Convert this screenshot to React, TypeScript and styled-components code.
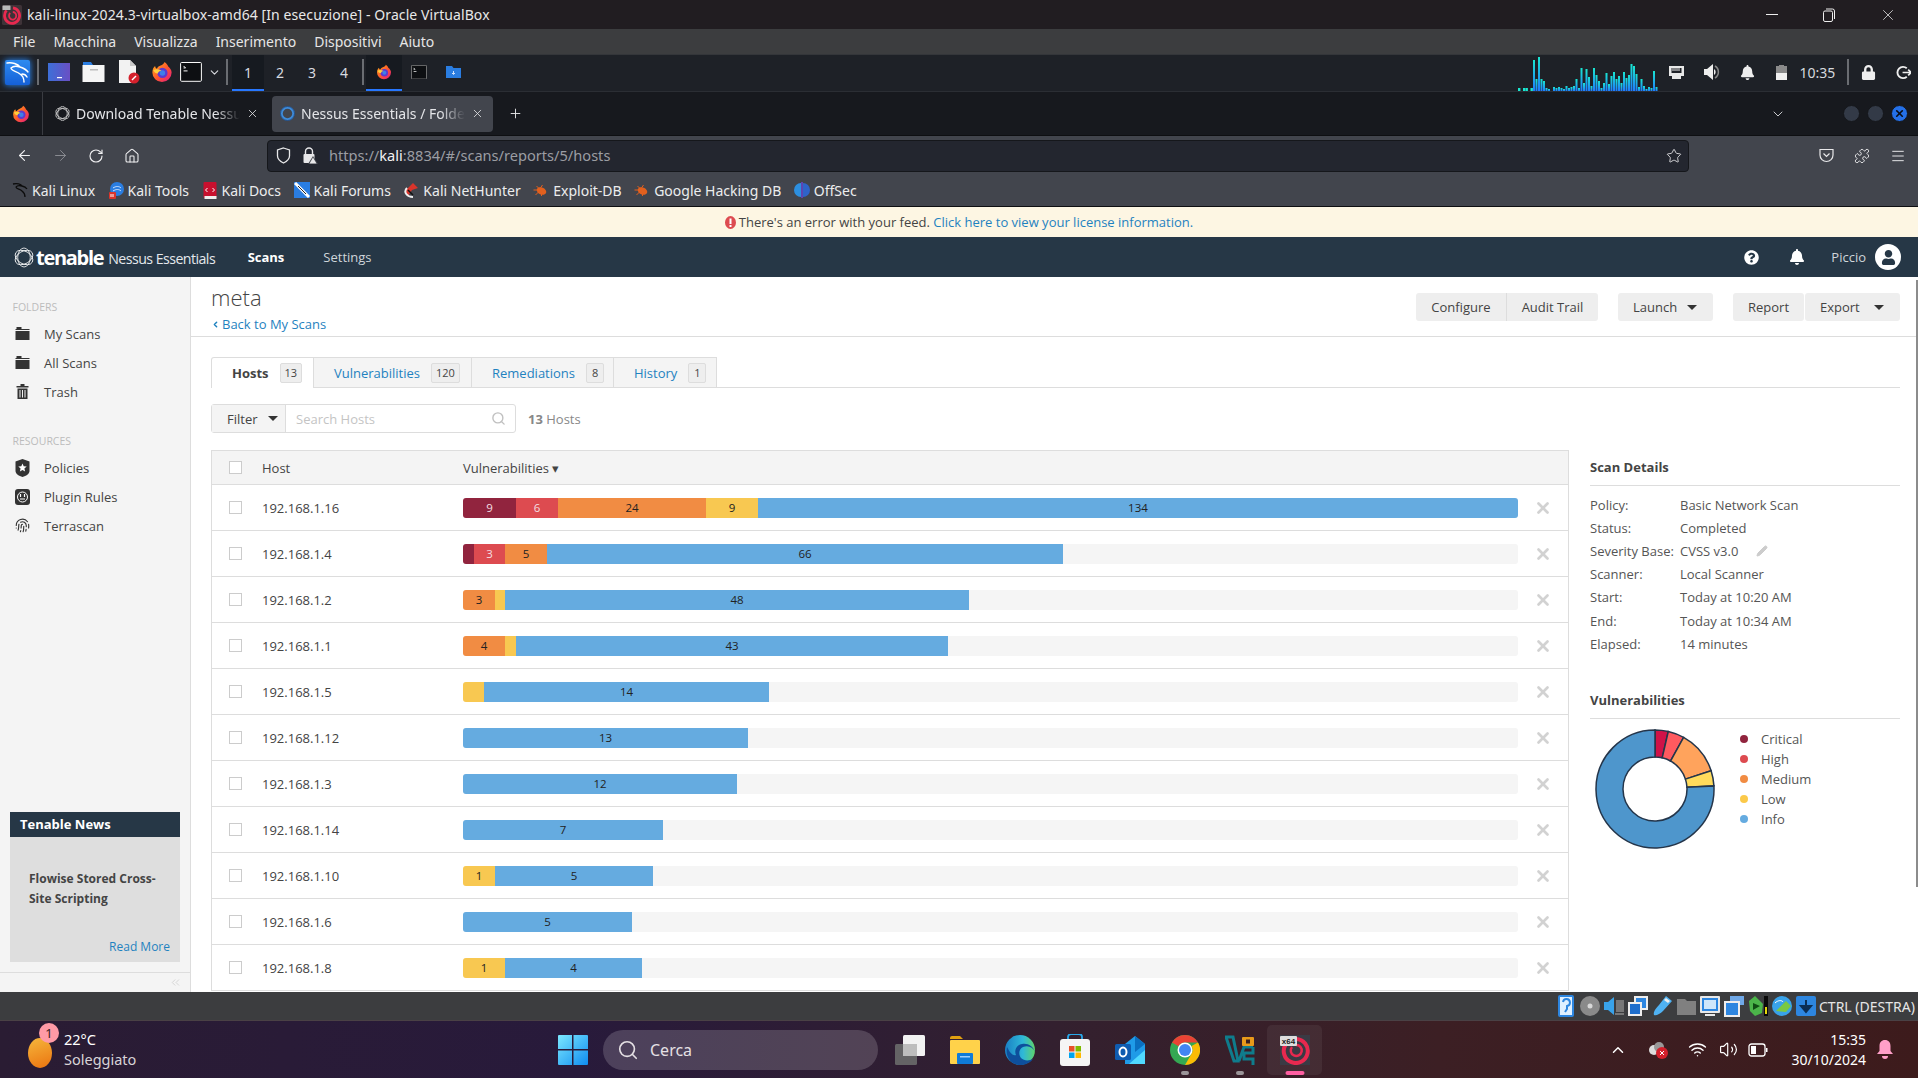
import React from "react";
import styled, { createGlobalStyle } from "styled-components";
import { ArrowLeft, ArrowRight, RotateCw, Home, Star, Menu, Puzzle, X, Plus, ChevronDown, ChevronUp, ChevronLeft, Search, ChevronsLeft, Fingerprint, Volume2, Wifi, Pencil } from "lucide-react";
import { FaBell, FaLock, FaQuestionCircle, FaUser } from "react-icons/fa";

const Global = createGlobalStyle`
  html, body { margin: 0; padding: 0; width: 1918px; height: 1078px; overflow: hidden; background: #fff; }
  * { box-sizing: border-box; }
  body { font-family: "Open Sans", "Noto Sans", sans-serif; }
`;

const Desktop = styled.div`display:flex;flex-direction:column;width:1918px;height:1078px;overflow:hidden;`;

/* ---------- VirtualBox chrome ---------- */
const TitleBar = styled.div`height:29px;flex:none;background:#211d21;color:#e8e8e8;display:flex;align-items:center;font:14px "Noto Sans",sans-serif;padding-left:2px;`;
const TitleText = styled.span`margin-left:5px;flex:1;letter-spacing:.09px;`;
const WinBtn = styled.span<{ $w: number }>`width:${p => p.$w}px;display:flex;justify-content:center;align-items:center;color:#eee;`;
const MenuBar = styled.div`height:26px;flex:none;background:#3c3d3f;color:#e6e6e6;display:flex;align-items:center;gap:18px;padding-left:13px;font:14px "Noto Sans",sans-serif;border-bottom:1px solid #34363a;`;

/* ---------- Kali panel ---------- */
const Panel = styled.div`height:37px;flex:none;background:#1e2127;display:flex;align-items:center;color:#d8dbe0;border-bottom:1px solid #2b2e34;padding-right:3px;`;
const PanelSlot = styled.div<{ $w: number; $on?: boolean }>`width:${p => p.$w}px;height:36px;flex:none;display:flex;align-items:center;justify-content:center;font:14px "Noto Sans",sans-serif;border-bottom:2px solid ${p => (p.$on ? "#2777ff" : "transparent")};background:${p => (p.$on ? "#161a20" : "transparent")};`;
const PanelSep = styled.i`width:2px;height:26px;background:#6a6d72;display:block;`;
const PanelClock = styled.span`font:14px "Noto Sans",sans-serif;color:#d6d9de;`;
const Grow = styled.div`flex:1;`;

/* ---------- Firefox ---------- */
const TabStrip = styled.div`height:43px;flex:none;background:#17191e;display:flex;align-items:center;color:#e4e5e8;font:14px "Noto Sans",sans-serif;padding-right:3px;`;
const StripSlot = styled.div<{ $w: number }>`width:${p => p.$w}px;flex:none;height:100%;display:flex;align-items:center;justify-content:center;`;
const StripDivider = styled.i`width:1px;height:100%;background:#3a3c42;display:block;`;
const BrowserTab = styled.div<{ $w: number; $on?: boolean; $pl: number; $pr: number }>`width:${p => p.$w}px;height:36px;flex:none;display:flex;align-items:center;gap:6px;padding:0 ${p => p.$pr}px 0 ${p => p.$pl}px;border-radius:4px;background:${p => (p.$on ? "#42454d" : "transparent")};`;
const TabLabel = styled.span`flex:1;overflow:hidden;white-space:nowrap;-webkit-mask-image:linear-gradient(90deg,#000 85%,transparent);mask-image:linear-gradient(90deg,#000 85%,transparent);`;
const WinDot = styled.span<{ $on?: boolean }>`width:17px;height:17px;border-radius:50%;background:${p => (p.$on ? "#2470e8" : "#333a47")};border:1px solid #15171b;display:flex;align-items:center;justify-content:center;margin-right:7px;color:#0b0d12;`;
const NavBar = styled.div`height:43px;flex:none;background:#42454d;display:flex;align-items:center;padding:0 2px 3px 6px;color:#e8e8ea;border-top:1px solid #0e0f12;`;
const NavBtn = styled.div<{ $dim?: boolean }>`width:36px;display:flex;justify-content:center;color:${p => (p.$dim ? "#8a8c92" : "#f0f0f2")};`;
const UrlBox = styled.div`width:1422px;height:32px;margin-left:117px;background:#23262f;border:1px solid #15171b;border-radius:4px;display:flex;align-items:center;padding:0 6px 0 8px;font:14.6px "Noto Sans",sans-serif;color:#9b9da3;`;
const UrlAddr = styled.span`margin-left:11px;flex:1;padding-bottom:1px;b{color:#f2f2f2;font-weight:400;}`;
const UrlGap = styled.span`width:11px;`;
const Bookmarks = styled.div`height:29px;flex:none;background:#42454d;border-bottom:1px solid #0e0f12;display:flex;align-items:center;gap:12.5px;padding:0 0 4px 12px;color:#eceded;font:14px "Noto Sans",sans-serif;`;
const Bookmark = styled.span`display:flex;align-items:center;gap:4px;svg{width:16px;flex:none;}`;

/* ---------- Nessus ---------- */
const FeedBar = styled.div`height:30px;flex:none;background:#fdf6e3;display:flex;align-items:center;justify-content:center;gap:3px;font-size:13px;color:#444;`;
const Link = styled.a`color:#1f82c0;text-decoration:none;`;
const AppHeader = styled.div`height:40px;flex:none;background:#263746;display:flex;align-items:center;padding-left:14px;color:#fff;`;
const Wordmark = styled.span`font:700 20px "Open Sans",sans-serif;letter-spacing:-1.3px;margin-left:2px;`;
const Product = styled.span`font-size:14.2px;letter-spacing:-.55px;margin-left:5px;color:#e4e8ec;margin-top:2px;`;
const TopNav = styled.span<{ $on?: boolean }>`font-size:13px;font-weight:${p => (p.$on ? 700 : 400)};color:${p => (p.$on ? "#fff" : "#cfd5da")};`;
const HeaderGap = styled.span<{ $w: number }>`width:${p => p.$w}px;flex:none;`;
const HeadRight = styled.div`margin-left:auto;display:flex;align-items:center;`;
const Avatar = styled.span`width:26px;height:26px;border-radius:50%;background:#fff;display:flex;align-items:center;justify-content:center;overflow:hidden;color:#263746;margin:0 17px 0 9px;`;
const Main = styled.div`height:715px;flex:none;display:flex;overflow:hidden;position:relative;`;
const Sidebar = styled.aside`width:191px;flex:none;background:#f4f4f4;border-right:1px solid #ddd;padding-top:23px;display:flex;flex-direction:column;`;
const SideLabel = styled.div<{ $mt?: number }>`height:14px;line-height:14px;font-size:10.5px;color:#bcbcbc;padding-left:12.5px;margin-top:${p => p.$mt ?? 0}px;margin-bottom:5px;`;
const SideItem = styled.div`height:29px;display:flex;align-items:center;font-size:13px;color:#444;padding-left:15px;gap:14px;svg{flex:none;width:15px;}`;
const NewsCard = styled.div`margin:auto 10px 10px;height:150px;background:#dedede;display:flex;flex-direction:column;`;
const NewsHead = styled.div`height:25px;background:#263746;color:#fff;font-weight:700;font-size:13px;line-height:25px;padding-left:10px;`;
const NewsTitle = styled.div`font-weight:700;font-size:12px;line-height:20px;color:#444;padding:32px 10px 0 19px;`;
const NewsMore = styled.div`margin-top:auto;text-align:right;padding:0 10px 7px 0;font-size:12px;`;
const SideFoot = styled.div`height:20px;border-top:1px solid #ddd;display:flex;justify-content:flex-end;align-items:center;padding-right:8px;color:#c4c4c4;`;
const Content = styled.main`flex:1;min-width:0;display:flex;flex-direction:column;background:#fff;`;
const PageHead = styled.div`height:60px;flex:none;border-bottom:1px solid #ddd;display:flex;justify-content:space-between;padding:0 18px 0 20px;`;
const PageTitleCol = styled.div`display:flex;flex-direction:column;`;
const PageTitle = styled.div`font-size:22px;font-weight:300;line-height:30px;margin-top:5px;color:#444;`;
const Back = styled(Link)`font-size:13px;line-height:18px;margin-top:3px;display:inline-flex;align-items:center;gap:2px;`;
const ActionRow = styled.div`display:flex;align-items:flex-start;padding-top:16px;`;
const Action = styled.div<{ $w: number; $ml?: number; $l?: boolean; $r?: boolean; $caret?: boolean; $div?: boolean }>`width:${p => p.$w}px;height:28px;margin-left:${p => p.$ml ?? 0}px;background:#eee;color:#444;font-size:13px;display:flex;align-items:center;justify-content:${p => (p.$caret ? "space-between" : "center")};padding:0 ${p => (p.$caret ? "16px 0 15px" : "0")};border-left:${p => (p.$div ? "1px solid #ddd" : "0")};border-radius:${p => (p.$l ? "3px" : 0)} ${p => (p.$r ? "3px 3px" : "0 0")} ${p => (p.$l ? "3px" : 0)};`;
const Caret = styled.i`width:0;height:0;border:5px solid transparent;border-top:5px solid #333;border-bottom:0;display:block;`;
const Body = styled.div`padding:20px 0 0 20px;flex:1;display:flex;flex-direction:column;min-height:0;`;
const TabRow = styled.div`height:31px;flex:none;display:flex;margin-right:18px;border-bottom:1px solid #ddd;`;
const ScanTab = styled.div<{ $w: number; $on?: boolean }>`width:${p => p.$w}px;height:${p => (p.$on ? 31 : 30)}px;background:${p => (p.$on ? "#fff" : "#f4f4f4")};border:1px solid #ddd;border-left-width:${p => (p.$on ? 1 : 0)}px;border-bottom:0;display:flex;align-items:center;padding-left:20px;gap:11px;font-size:13px;font-weight:${p => (p.$on ? 700 : 400)};color:${p => (p.$on ? "#444" : "#1f82c0")};border-radius:${p => (p.$on ? "3px 0 0 0" : 0)};`;
const Count = styled.span`min-width:18px;height:20px;padding:0 4px;border:1px solid #ddd;background:#eee;border-radius:2px;color:#444;font-size:11px;font-weight:400;line-height:18px;text-align:center;`;
const FilterRow = styled.div`height:29px;margin-top:16px;flex:none;display:flex;align-items:center;`;
const FilterGroup = styled.div`width:305px;height:29px;border:1px solid #ddd;border-radius:3px;display:flex;align-items:stretch;`;
const FilterBtn = styled.div`width:74px;background:#f4f4f4;border-right:1px solid #ddd;color:#444;font-size:13px;display:flex;align-items:center;gap:10px;padding-left:15px;`;
const SearchField = styled.div`flex:1;display:flex;align-items:center;justify-content:space-between;padding:0 9px 0 10px;color:#c4c4c4;font-size:13px;`;
const HostCount = styled.div`margin-left:12px;font-size:13px;color:#888;b{font-weight:700;}`;
const Columns = styled.div`margin-top:17px;display:flex;align-items:flex-start;`;
const Table = styled.div`width:1358px;flex:none;border:1px solid #ddd;border-bottom:0;`;
const Row = styled.div<{ $head?: boolean }>`height:${p => (p.$head ? 34 : 46)}px;display:grid;grid-template-columns:50px 201px 1055px 1fr;align-items:center;background:${p => (p.$head ? "#f4f4f4" : "#fff")};border-bottom:1px solid #ddd;font-size:13px;color:#444;`;
const Check = styled.span`width:13px;height:13px;border:1px solid #ccc;background:#fff;margin-left:17px;display:block;`;
const Track = styled.div`height:20px;background:#f5f5f5;border-radius:3px;display:flex;overflow:hidden;`;
const Seg = styled.div<{ $c: string; $t: string }>`background:${p => p.$c};color:${p => p.$t};font-size:11.5px;line-height:20px;text-align:center;flex:none;`;
const RowX = styled.div`display:flex;justify-content:center;color:#d2d2d2;`;
const Aside = styled.div`width:310px;margin-left:21px;flex:none;`;
const AsideTitle = styled.div<{ $mt?: number }>`height:36px;line-height:34px;font-weight:700;font-size:13px;color:#444;border-bottom:1px solid #ddd;margin-top:${p => p.$mt ?? 0}px;`;
const Details = styled.div`padding-top:7px;`;
const DetailRow = styled.div`height:23.2px;display:grid;grid-template-columns:90px auto 1fr;align-items:center;font-size:13px;color:#555;`;
const PencilWrap = styled.span`margin-left:18px;color:#ccc;display:flex;`;
const ChartRow = styled.div`display:flex;margin-top:10px;padding-left:5px;`;
const Legend = styled.div`margin-left:25px;`;
const LegendItem = styled.div`height:20px;display:flex;align-items:center;gap:13px;font-size:13px;color:#555;`;
const LegendDot = styled.i<{ $c: string }>`width:8px;height:8px;border-radius:50%;background:${p => p.$c};display:block;`;
const ScrollThumb = styled.div`position:absolute;right:0;top:3px;width:2px;height:607px;background:#8c8c8c;`;

/* ---------- bottom ---------- */
const StatusBar = styled.div`height:28px;flex:none;background:#3c3d3f;display:flex;align-items:center;justify-content:flex-end;color:#e6e6e6;font:14px "Noto Sans",sans-serif;`;
const StatusIcon = styled.span`width:24px;display:flex;justify-content:center;`;
const StatusText = styled.span`width:100px;padding-left:1px;white-space:nowrap;`;
const Taskbar = styled.div`flex:1;background:linear-gradient(90deg,#2a1c33 0%,#281a3b 30%,#33202f 55%,#3c1f24 75%,#3d1b1c 100%);display:flex;align-items:center;color:#fff;font:14px "Noto Sans",sans-serif;border-top:1px solid #4a4145;`;
const Weather = styled.div`width:545px;flex:none;display:flex;align-items:center;padding-left:28px;`;
const WeatherOrb = styled.div`width:24px;height:30px;border-radius:50%;background:linear-gradient(160deg,#f6b73c,#ea7310);position:relative;margin-top:6px;`;
const WeatherBadge = styled.span`position:absolute;left:11px;top:-15px;width:20px;height:20px;border-radius:50%;background:#ff9aa6;color:#3a1a20;font-size:13px;text-align:center;line-height:20px;`;
const WeatherText = styled.div`margin-left:12px;line-height:20px;font-size:14.5px;margin-top:-1px;span{display:block;color:#d8d4d8;}`;
const TaskSlot = styled.div<{ $w?: number; $on?: boolean }>`width:${p => p.$w ?? 55}px;height:50px;flex:none;display:flex;flex-direction:column;align-items:center;justify-content:center;position:relative;border-radius:5px;background:${p => (p.$on ? "rgba(255,255,255,.06)" : "transparent")};`;
const TaskPip = styled.i<{ $on?: boolean }>`position:absolute;bottom:0;left:50%;transform:translateX(-50%);height:4px;width:${p => (p.$on ? 19 : 8)}px;border-radius:2px;background:${p => (p.$on ? "#ff5fa2" : "#9b9599")};`;
const SearchPill = styled.div`width:275px;height:40px;margin:0 4px 0 3px;border-radius:20px;background:rgba(255,255,255,.17);display:flex;align-items:center;padding-left:14px;gap:11px;color:#e5e0e4;font-size:16px;`;
const Tray = styled.div`margin-left:auto;display:flex;align-items:center;padding-right:14px;`;
const TrayClock = styled.div`width:92px;text-align:right;line-height:19.5px;font-size:14px;`;

/* ---------- drawings ---------- */
const Firefox = ({ s = 22 }: { s?: number }) => (
  <svg width={s} height={s} viewBox="0 0 24 24">
    <defs><linearGradient id="ffg" x1="0" y1="0" x2="1" y2="1"><stop offset="0" stopColor="#ffb21a" /><stop offset=".5" stopColor="#ff5a2c" /><stop offset="1" stopColor="#e31587" /></linearGradient></defs>
    <path d="M12 23a10.5 10.5 0 0 1-10.5-10.5C1.5 9 3 6.5 4.5 5.5 4.6 7 5.4 8 6.4 8.4 7.2 6.500 9 5.500 10.500 5 12.500 4 14.500 2.500 14.800 1c2.500 2 3.500 3.700 4 5 2 1.500 3.700 4 3.700 6.500A10.500 10.500 0 0 1 12 23z" fill="url(#ffg)" />
    <circle cx="12.500" cy="13" r="5.600" fill="#5b3bd0" /><circle cx="12.500" cy="13" r="3" fill="#3f7fe8" />
    <path d="M2.500 10c3-1.500 6-1 9 .5-2 .3-3.500 1-4 3C6 14 3.500 12.500 2.500 10z" fill="#ffcf3c" />
  </svg>
);
const VBoxLogo = ({ s = 20 }: { s?: number }) => (
  <svg width={s} height={s} viewBox="0 0 20 20">
    <rect width="20" height="20" rx="1.500" fill="#3f3338" />
    <path d="M11 2.800a7.500 7.800 0 1 1-6.500 2.500" fill="none" stroke="#e8294f" strokeWidth="2.800" />
    <path d="M10.800 7a3.600 3.800 0 1 1-2.600 1" fill="none" stroke="#e8294f" strokeWidth="1.800" />
    <rect x="0.500" y="0.500" width="8" height="4.500" rx=".5" fill="#b8b8b8" />
  </svg>
);
const Kali = () => (
  <svg width="25" height="25" viewBox="0 0 25 25" style={{ filter: "drop-shadow(0 0 3px #2a8cff)" }}>
    <defs><linearGradient id="kg" x1="0" y1="0" x2="0" y2="1"><stop offset="0" stopColor="#2d8bf0" /><stop offset="1" stopColor="#1560d8" /></linearGradient></defs>
    <rect width="25" height="25" rx="2" fill="url(#kg)" />
    <path d="M2 3c5-1 11 1 13 4-3-1-7-1-9 1 0 3 6 3 9 6 3 2 4 5 4 8M15 7c3 1 6 2 8 5M17 14c2 0 4 1 5 3" fill="none" stroke="#fff" strokeWidth="1.400" strokeLinecap="round" />
  </svg>
);
const TenableRing = () => (
  <svg width="20" height="21" viewBox="0 0 20 21" fill="none" stroke="#fff" strokeWidth=".8">
    <ellipse cx="10" cy="10.500" rx="9.500" ry="6.300" transform="rotate(30 10 10.500)" />
    <ellipse cx="10" cy="10.500" rx="9.500" ry="6.300" transform="rotate(90 10 10.500)" />
    <ellipse cx="10" cy="10.500" rx="9.500" ry="6.300" transform="rotate(150 10 10.500)" />
  </svg>
);
const FolderGlyph = () => (<svg width="14" height="13" viewBox="0 0 14 13" fill="#333"><rect x="1" y="0" width="5" height="2" /><rect x="0" y="2" width="14" height="1" /><rect x="0" y="4" width="14" height="9" /></svg>);
const TrashGlyph = () => (<svg width="14" height="15" viewBox="0 0 14 15" fill="#333"><rect x="1" y="2" width="12" height="1.500" /><rect x="5" y="0" width="4" height="2" /><path d="M2 4.500h10V15H2zM4 6v7.500h1V6zm2.500 0v7.500h1V6zM9 6v7.500h1V6z" fillRule="evenodd" /></svg>);
const ShieldStar = () => (<svg width="14" height="18" viewBox="0 0 14 18"><path d="M7 0l7 2.500V12c0 3-3.500 5-7 6-3.500-1-7-3-7-6V2.500z" fill="#333" /><path d="M7 4.500l1.200 2.800 3 .2-2.300 2 .7 3L7 11l-2.600 1.500.7-3-2.300-2 3-.2z" fill="#fff" /></svg>);
const PlugBox = () => (<svg width="15" height="16" viewBox="0 0 15 16"><rect width="15" height="16" rx="3" fill="#333" /><circle cx="7.500" cy="8" r="5" fill="none" stroke="#fff" strokeWidth="1" /><path d="M5.500 5v3M9.500 5v3M5 10h5" stroke="#fff" strokeWidth="1.200" /></svg>);

const Doc = () => (<svg width="22" height="24" viewBox="0 0 22 24"><path d="M1 0h11l6 6v17H1z" fill="#f2f2f2" /><path d="M12 0l6 6h-6z" fill="#c9c9c9" /><circle cx="16" cy="18" r="5.500" fill="#d4202c" /><path d="M14 20l4-4" stroke="#fff" strokeWidth="1.500" /></svg>);
const FileMgr = () => (<svg width="23" height="20" viewBox="0 0 23 20"><path d="M1 0h8l2 3H1z" fill="#2a7de1" /><rect x="0.500" y="3" width="22" height="17" fill="#f5f5f5" /><rect x="8" y="7" width="8" height="1.500" fill="#bbb" /></svg>);
const DesktopIcon = () => (<svg width="22" height="18" viewBox="0 0 22 18"><defs><linearGradient id="dsk" x1="0" x2="1"><stop offset="0" stopColor="#3d6fd8" /><stop offset="1" stopColor="#6a4fc4" /></linearGradient></defs><rect width="22" height="18" fill="url(#dsk)" /><rect x="9" y="14" width="5" height="1.200" fill="#fff" /></svg>);
const Term = ({ s = 22, box = "#fff" }: { s?: number; box?: string }) => (<svg width={s} height={s * 0.9} viewBox="0 0 22 20"><rect x=".5" y=".5" width="21" height="19" rx="1" fill="#0d0f12" stroke={box} /><path d="M3.500 4l2 2-2 0M3.500 9h4" stroke="#fff" strokeWidth="1" fill="none" /></svg>);
const SmallFolder = () => (<svg width="15" height="12" viewBox="0 0 15 12"><path d="M0 0h6l1.500 2H15v10H0z" fill="#2a7de1" /><path d="M7.500 5v3m-1.500-1l1.500 1.500L9 7" stroke="#cfe3ff" fill="none" /></svg>);
const NetGraph = () => {
  const h = [3, 0, 3, 3, 0, 3, 31, 12, 34, 12, 10, 3, 2, 0, 4, 3, 4, 3, 2, 5, 3, 4, 5, 12, 3, 23, 8, 22, 14, 5, 23, 16, 10, 3, 8, 18, 7, 15, 19, 12, 15, 8, 19, 13, 16, 27, 25, 17, 4, 12, 5, 2, 4, 3, 20, 4];
  return (
    <svg width="140" height="35" viewBox="0 0 140 35">
      <defs><linearGradient id="ng" x1="0" y1="0" x2="0" y2="1"><stop offset="0" stopColor="#19e6d0" /><stop offset="1" stopColor="#1f7aff" /></linearGradient></defs>
      {h.map((v, i) => v > 0 && <rect key={i} x={i * 2.500} y={35 - v} width={i < 6 ? 2.400 : 2} height={v} fill={i < 6 ? "#19e6d0" : "url(#ng)"} />)}
    </svg>
  );
};
const NetIcon = () => (<svg width="15" height="15" viewBox="0 0 15 15"><path d="M0 1h15v10h-3v3H3v-3H0z" fill="#e8e8e8" /><path d="M2.500 3h10v5h-10z" fill="#1e2127" /><path d="M4 3v3M6 3v3M8 3v3M10 3v3" stroke="#e8e8e8" /></svg>);
const SpeakerIcon = () => (<svg width="18" height="18" viewBox="0 0 18 18"><path d="M0 6h3l6-5v16l-6-5H0z" fill="#eee" /><path d="M11 3a7 7 0 0 1 0 12" stroke="#888" strokeWidth="1.500" fill="none" /><path d="M10 6a3.500 3.500 0 0 1 0 6z" fill="#eee" /></svg>);
const BatteryIcon = () => (<svg width="11" height="15" viewBox="0 0 11 15"><rect x="0" y="1" width="11" height="14" fill="#8a8a8a" /><rect x="3" width="5" height="1" fill="#8a8a8a" /><rect y="8" width="11" height="7" fill="#f0f0f0" /></svg>);
const PowerIcon = () => (<svg width="15" height="15" viewBox="0 0 16 16" fill="none" stroke="#eee" strokeWidth="2"><path d="M11.500 3.500a6 6 0 1 0 0 9" /><path d="M7 8h9M13 5l3 3-3 3" strokeWidth="1.800" /></svg>);
const RestoreIcon = () => (<svg width="12" height="14" viewBox="0 0 12 14" fill="none" stroke="#eee"><rect x=".5" y="3" width="9" height="10.500" rx="1.500" /><path d="M3 1h6.500A2 2 0 0 1 11.500 3v8" /></svg>);
const ShieldOut = () => (<svg width="15" height="17" viewBox="0 0 15 17" fill="none" stroke="#e8e8ea" strokeWidth="1.300"><path d="M7.500 1l6 2v6c0 3-3 5.500-6 7-3-1.500-6-4-6-7V3z" /></svg>);
const LockWarn = () => (<svg width="16" height="17" viewBox="0 0 16 17"><path d="M3.500 7V4.500a3.500 3.500 0 0 1 7 0V7" fill="none" stroke="#e8e8ea" strokeWidth="1.400" /><rect x="1.500" y="7" width="11" height="9" rx="1" fill="#e8e8ea" /><path d="M11 9l5 8H6z" fill="#42454d" /><path d="M11 10.500l3.500 6h-7z" fill="#e8e8ea" /></svg>);
const Pocket = () => (<svg width="15" height="15" viewBox="0 0 15 15" fill="none" stroke="#e8e8ea" strokeWidth="1.200"><path d="M1 1.500h13V7A6.500 6.500 0 0 1 1 7z" /><path d="M4.500 5.500l3 3 3-3" /></svg>);
const NessusIcon = () => (<svg width="15" height="15" viewBox="0 0 15 15"><circle cx="7.500" cy="7.500" r="6" fill="none" stroke="#3f8bd8" strokeWidth="2.500" /><circle cx="7.500" cy="7.500" r="7" fill="none" stroke="#1a3e72" strokeWidth=".7" /></svg>);
const Spinner = () => (<svg width="15" height="15" viewBox="0 0 20 20" fill="none" stroke="#d8d8d8" strokeWidth="1"><ellipse cx="10" cy="10" rx="9.500" ry="6.300" transform="rotate(30 10 10)" /><ellipse cx="10" cy="10" rx="9.500" ry="6.300" transform="rotate(90 10 10)" /><ellipse cx="10" cy="10" rx="9.500" ry="6.300" transform="rotate(150 10 10)" /></svg>);
const Bug = () => (<svg width="15" height="13" viewBox="0 0 15 13"><ellipse cx="8" cy="7" rx="5" ry="3.500" fill="#e2601e" transform="rotate(25 8 7)" /><path d="M0 6h4M3 2l3 3M9 1l-2 3M2 11l3-3M8 12l0-3" stroke="#e2601e" /></svg>);

const BmKali = () => (<svg width="16" height="16" viewBox="0 0 16 16" fill="none" stroke="#0c0c0c" strokeWidth="1.300"><path d="M1 2c4-1 8 0 9 2-2-.5-5-.5-6 1 0 2 4 2 6 4 2 1.500 3 3 3 6M10 4c2 .5 4 1.500 5 3" /></svg>);
const BmTools = () => (<svg width="16" height="17" viewBox="0 0 16 17"><circle cx="9" cy="7" r="7" fill="#2a7de1" /><path d="M5 6c3-2 6-2 8 0M5 9c3-2 6-2 8 0" stroke="#cfe3ff" fill="none" /><rect x="1" y="10" width="7" height="7" rx="1" fill="#d9342b" /><path d="M3 12v3M5 12v3" stroke="#fff" /></svg>);
const BmDocs = () => (<svg width="13" height="17" viewBox="0 0 13 17"><rect width="13" height="16" rx="1" fill="#c8102e" /><rect x="1" y="14" width="12" height="3" fill="#eee" /><path d="M4 6l-2 2 2 2M9 6l2 2-2 2" stroke="#fff" fill="none" /></svg>);
const BmForums = () => (<svg width="16" height="16" viewBox="0 0 16 16"><rect width="16" height="16" fill="#2a7de1" /><path d="M1 1l14 14" stroke="#fff" strokeWidth="3" /><path d="M4 4l8 8" stroke="#222" strokeWidth="1" /></svg>);
const BmHunter = () => (<svg width="16" height="16" viewBox="0 0 16 16" fill="none"><path d="M2 9l8-8 5 5-6 2-4 6z" fill="#d9342b" /><path d="M4 6c-4 4 0 9 6 9" stroke="#eee" strokeWidth="2" /><path d="M5 8l5 5" stroke="#111" strokeWidth="1.500" /></svg>);
const BmOff = () => (<svg width="15" height="16" viewBox="0 0 15 16"><path d="M6.500 1A7 7 0 0 0 6.500 15z" fill="#2c8fe0" /><path d="M8.500 1A7 7 0 0 1 8.500 15z" fill="#2f63c8" /><path d="M7.500 0v16" stroke="#6a44d0" strokeWidth="1.500" /></svg>);

const St = ({ k }: { k: number }) => {
  const b = "#2d86e0";
  switch (k) {
    case 0: return <svg width="16" height="22" viewBox="0 0 16 22"><rect width="16" height="22" rx="2" fill={b} /><rect x="2" y="2" width="12" height="18" fill="#dff0ff" /><path d="M5 7a3.500 3.500 0 1 1 4 4v3l-2 3" stroke={b} strokeWidth="2" fill="none" /></svg>;
    case 1: return <svg width="20" height="20" viewBox="0 0 20 20"><circle cx="10" cy="10" r="10" fill="#8a8a8a" /><circle cx="10" cy="10" r="2.500" fill="#d8d8d8" /></svg>;
    case 2: return <svg width="20" height="20" viewBox="0 0 20 20"><path d="M0 6h4l6-5v18l-6-5H0z" fill="#39a3ea" /><rect x="12" y="4" width="8" height="12" fill="#777" /><rect x="11" y="17" width="9" height="2" fill="#777" /></svg>;
    case 3: return <svg width="20" height="20" viewBox="0 0 20 20"><rect x="6" y="0" width="14" height="14" fill="#eee" /><rect x="8" y="2" width="10" height="10" fill={b} /><rect x="0" y="6" width="14" height="14" fill="#eee" /><rect x="2" y="8" width="10" height="10" fill="#1e6ecc" /></svg>;
    case 4: return <svg width="20" height="20" viewBox="0 0 20 20"><path d="M14 0l6 5-9 10c-3 3-7 5-9 4-1-3 2-7 5-10z" fill="#4fb2f2" /><path d="M14 2l4 3-2 2-4-3z" fill="#eee" /></svg>;
    case 5: return <svg width="19" height="18" viewBox="0 0 19 18"><path d="M0 2h8l2 2h9v14H0z" fill="#808080" /></svg>;
    case 6: return <svg width="20" height="20" viewBox="0 0 20 20"><rect width="20" height="17" rx="1" fill="#e8e8e8" /><rect x="2" y="2" width="16" height="13" fill={b} /><rect x="4" y="4" width="12" height="9" fill="#cfe6fa" /><rect x="5" y="18" width="10" height="2" fill="#e8e8e8" /></svg>;
    case 7: return <svg width="20" height="21" viewBox="0 0 20 21"><rect x="6" y="0" width="14" height="9" fill="#6fa8e8" /><rect x="0" y="5" width="16" height="16" fill="#eee" /><rect x="2" y="7" width="12" height="12" fill={b} /></svg>;
    case 8: return <svg width="20" height="20" viewBox="0 0 20 20"><rect x="16" width="4" height="20" fill="#0a0a0a" /><rect x="17" y="11" width="2" height="7" fill="#e8d80a" /><path d="M1 5l6-5 8 8-1 9-7 3-5-5z" fill="#4bb54a" /><path d="M5 7l7 3-7 4z" fill="#0f4d14" /></svg>;
    case 9: return <svg width="20" height="22" viewBox="0 0 20 22"><circle cx="10" cy="11" r="10" fill="#39a3ea" /><path d="M4 16L14 6l5 5-5 6z" fill="#7ac943" /><path d="M3 8c3-3 7-3 8-1" stroke="#fff" fill="none" /></svg>;
    default: return <svg width="20" height="20" viewBox="0 0 20 20"><rect width="20" height="20" rx="2" fill={b} /><path d="M10 4v8M5 10h10l-5 6z" stroke="#0b2e55" strokeWidth="2" fill="#0b2e55" /></svg>;
  }
};

const WinLogo = () => (<svg width="30" height="30" viewBox="0 0 30 30"><defs><linearGradient id="wl" x1="0" y1="0" x2="1" y2="1"><stop offset="0" stopColor="#7ce8ff" /><stop offset="1" stopColor="#0f8cf0" /></linearGradient></defs><path d="M0 1a1 1 0 0 1 1-1h13v14H0zM15.500 0H29a1 1 0 0 1 1 1v13H15.500zM0 15.500h14V30H1a1 1 0 0 1-1-1zM15.500 15.500H30V29a1 1 0 0 1-1 1H15.500z" fill="url(#wl)" /></svg>);
const TaskView = () => (<svg width="30" height="30" viewBox="0 0 30 30"><rect x="8" y="0" width="22" height="21" rx="1.500" fill="#f2f2f2" /><rect x="0" y="9" width="22" height="21" rx="1.500" fill="#6a6a6a" opacity=".9" /><rect x="8" y="9" width="14" height="12" fill="#bdbdbd" /></svg>);
const Explorer = () => (<svg width="30" height="28" viewBox="0 0 30 28"><path d="M0 2a2 2 0 0 1 2-2h8l3 3H0z" fill="#e0a010" /><rect y="4" width="30" height="24" rx="1" fill="#ffd24a" /><rect x="7" y="17" width="16" height="11" rx="1" fill="#0f7bd8" /><rect x="10" y="20" width="10" height="1.500" fill="#9cd0ff" /></svg>);
const Edge = () => (<svg width="30" height="30" viewBox="0 0 30 30"><defs><linearGradient id="eg" x1="0" y1="0" x2="1" y2="0"><stop offset="0" stopColor="#1a7fc4" /><stop offset=".6" stopColor="#2fb8d8" /><stop offset="1" stopColor="#5fd36a" /></linearGradient></defs><circle cx="15" cy="15" r="15" fill="url(#eg)" /><path d="M30 17c-2-5-7-7-12-5-4 2-5 7-2 11 3 3 8 3 12 1-3 4-8 6-13 6C6 30 0 22 2 12 5 18 8 21 11 20 9 16 11 10 17 9c6-1 11 2 13 8z" fill="#0e4f9c" /></svg>);
const Store = () => (<svg width="30" height="32" viewBox="0 0 30 32"><path d="M8 6V3a3 3 0 0 1 3-3h8a3 3 0 0 1 3 3v3" fill="none" stroke="#28a8ea" strokeWidth="1.800" /><rect y="5" width="30" height="27" rx="3" fill="#f5f5f5" /><rect x="9" y="12" width="5.500" height="5.500" fill="#e8502a" /><rect x="15.500" y="12" width="5.500" height="5.500" fill="#7fba00" /><rect x="9" y="18.500" width="5.500" height="5.500" fill="#00a4ef" /><rect x="15.500" y="18.500" width="5.500" height="5.500" fill="#ffb900" /></svg>);
const Outlook = () => (<svg width="30" height="28" viewBox="0 0 30 28"><path d="M10 8l10-8 10 8v18a2 2 0 0 1-2 2H10z" fill="#1f9be8" /><path d="M20 0l10 8-10 8z" fill="#0a6fc0" /><path d="M14 28l16-14v14z" fill="#50d9ff" /><rect y="8" width="16" height="16" rx="1.500" fill="#0f5cb0" /><ellipse cx="8" cy="16" rx="3.500" ry="4.500" fill="none" stroke="#fff" strokeWidth="2" /></svg>);
const Chrome = () => (<svg width="30" height="30" viewBox="0 0 30 30"><circle cx="15" cy="15" r="15" fill="#34a853" /><path d="M15 0a15 15 0 0 1 13 7.500H15a7.500 7.500 0 0 0-6.500 3.750L2 7.500A15 15 0 0 1 15 0z" fill="#ea4335" /><path d="M28 7.500A15 15 0 0 1 15 30l6.500-11.250A7.500 7.500 0 0 0 21.500 11z" fill="#fbbc04" /><circle cx="15" cy="15" r="7.500" fill="#fff" /><circle cx="15" cy="15" r="6" fill="#4285f4" /></svg>);
const VeraLogo = () => (<svg width="30" height="30" viewBox="0 0 30 30" fill="none"><path d="M1 2h7l5 24h-4zM14 26l5-14h9M28 12v6H19v6h9v6" stroke="#0f7c8c" strokeWidth="3" /><rect x="17" y="2" width="12" height="9" rx="1" fill="#e89a1a" /><rect x="21" y="4.500" width="4" height="4" fill="#3a2020" /></svg>);
const VBoxTask = () => (
  <svg width="30" height="30" viewBox="0 0 30 30"><rect width="30" height="30" fill="#3a3a44" /><path d="M16 4a12 12 0 1 1-10 5" fill="none" stroke="#e8294f" strokeWidth="4" /><path d="M16 10a5.500 5.500 0 1 1-4 2" fill="none" stroke="#e8294f" strokeWidth="2.500" /><rect y="1" width="17" height="10" rx="1" fill="#ddd" /><text x="8.500" y="9" fontSize="8" fontWeight="700" textAnchor="middle" fill="#222" fontFamily="Liberation Sans">x64</text></svg>
);
const CloudX = () => (<svg width="22" height="20" viewBox="0 0 22 20"><circle cx="7" cy="10" r="5" fill="#ddd" /><circle cx="12" cy="7" r="5" fill="#999" /><circle cx="15" cy="13" r="6" fill="#d4202c" /><path d="M13 11l4 4m0-4l-4 4" stroke="#fff" /></svg>);
const BatteryOut = () => (<svg width="20" height="14" viewBox="0 0 20 14" fill="none" stroke="#fff" strokeWidth="1.300"><rect x="1" y="1" width="16" height="12" rx="2.500" /><rect x="3" y="3" width="5" height="8" fill="#fff" stroke="none" /><rect x="18" y="5" width="1.500" height="4" fill="#fff" stroke="none" /></svg>);
const PinkBell = () => (<svg width="16" height="20" viewBox="0 0 16 20"><path d="M8 0c3.500 0 5.500 2.500 5.500 6v5l2.500 3H0l2.500-3V6C2.500 2.500 4.500 0 8 0z" fill="#ff9fc8" /><path d="M5 16h6a3 3 0 0 1-6 0z" fill="#ff9fc8" /></svg>);

/* ---------- donut ---------- */
const polar = (r: number, a: number) => {
  const t = ((a - 90) * Math.PI) / 180;
  return [60 + r * Math.cos(t), 60 + r * Math.sin(t)];
};
const arc = (a: number, b: number) => {
  const R = 59;
  const q = 32;
  const [x1, y1] = polar(R, a), [x2, y2] = polar(R, b), [x3, y3] = polar(q, b), [x4, y4] = polar(q, a);
  const l = b - a > 180 ? 1 : 0;
  return `M${x1} ${y1}A${R} ${R} 0 ${l} 1 ${x2} ${y2}L${x3} ${y3}A${q} ${q} 0 ${l} 0 ${x4} ${y4}Z`;
};
const Donut = () => (
  <svg width="120" height="120" viewBox="0 0 120 120">
    {[[0, 13, "#cf1248"], [13, 29, "#ff5a5f"], [29, 72, "#ffa35c"], [72, 87, "#ffdb5c"], [87, 360, "#4e96cc"]].map(([a, b, c]) => (
      <path key={String(a)} d={arc(a as number, b as number)} fill={c as string} stroke="#24354a" strokeWidth="1.500" />
    ))}
  </svg>
);

/* ---------- data ---------- */
const C = { crit: "#91243e", high: "#dd4b50", med: "#f18c43", low: "#f8c851", info: "#65abe0" };
type S = [keyof typeof C, number, string?];
const rows: [string, S[]][] = [
  ["192.168.1.16", [["crit", 53, "9"], ["high", 42, "6"], ["med", 148, "24"], ["low", 52, "9"], ["info", 760, "134"]]],
  ["192.168.1.4", [["crit", 11], ["high", 31, "3"], ["med", 42, "5"], ["info", 516, "66"]]],
  ["192.168.1.2", [["med", 32, "3"], ["low", 10], ["info", 464, "48"]]],
  ["192.168.1.1", [["med", 42, "4"], ["low", 11], ["info", 432, "43"]]],
  ["192.168.1.5", [["low", 21], ["info", 285, "14"]]],
  ["192.168.1.12", [["info", 285, "13"]]],
  ["192.168.1.3", [["info", 274, "12"]]],
  ["192.168.1.14", [["info", 200, "7"]]],
  ["192.168.1.10", [["low", 32, "1"], ["info", 158, "5"]]],
  ["192.168.1.6", [["info", 169, "5"]]],
  ["192.168.1.8", [["low", 42, "1"], ["info", 137, "4"]]],
];
const details: [string, string][] = [
  ["Policy:", "Basic Network Scan"], ["Status:", "Completed"], ["Severity Base:", "CVSS v3.0"], ["Scanner:", "Local Scanner"],
  ["Start:", "Today at 10:20 AM"], ["End:", "Today at 10:34 AM"], ["Elapsed:", "14 minutes"],
];

export default function App() {
  return (
    <Desktop>
      <Global />
      <TitleBar>
        <VBoxLogo />
        <TitleText>kali-linux-2024.3-virtualbox-amd64 [In esecuzione] - Oracle VirtualBox</TitleText>
        <WinBtn $w={56}><svg width="12" height="2"><rect width="12" height="1" fill="#eee" /></svg></WinBtn>
        <WinBtn $w={58}><RestoreIcon /></WinBtn>
        <WinBtn $w={60}><X size={18} strokeWidth={1} /></WinBtn>
      </TitleBar>
      <MenuBar>{["File", "Macchina", "Visualizza", "Inserimento", "Dispositivi", "Aiuto"].map(m => <span key={m}>{m}</span>)}</MenuBar>
      <Panel>
        <PanelSlot $w={34}><Kali /></PanelSlot>
        <PanelSlot $w={8}><PanelSep /></PanelSlot>
        <PanelSlot $w={34}><DesktopIcon /></PanelSlot>
        <PanelSlot $w={34}><FileMgr /></PanelSlot>
        <PanelSlot $w={37}><Doc /></PanelSlot>
        <PanelSlot $w={29}><Firefox /></PanelSlot>
        <PanelSlot $w={30}><Term /></PanelSlot>
        <PanelSlot $w={16}><ChevronDown size={13} /></PanelSlot>
        <PanelSlot $w={10}><PanelSep /></PanelSlot>
        <PanelSlot $w={32} $on>1</PanelSlot>
        <PanelSlot $w={32}>2</PanelSlot>
        <PanelSlot $w={32}>3</PanelSlot>
        <PanelSlot $w={32}>4</PanelSlot>
        <PanelSlot $w={6}><PanelSep /></PanelSlot>
        <PanelSlot $w={36} $on><Firefox s={16} /></PanelSlot>
        <PanelSlot $w={34}><Term s={16} box="#999" /></PanelSlot>
        <PanelSlot $w={34}><SmallFolder /></PanelSlot>
        <Grow />
        <NetGraph />
        <PanelSlot $w={38}><NetIcon /></PanelSlot>
        <PanelSlot $w={34}><SpeakerIcon /></PanelSlot>
        <PanelSlot $w={35}><FaBell size={15} color="#eee" /></PanelSlot>
        <PanelSlot $w={33}><BatteryIcon /></PanelSlot>
        <PanelSlot $w={40}><PanelClock>10:35</PanelClock></PanelSlot>
        <PanelSlot $w={20}><PanelSep /></PanelSlot>
        <PanelSlot $w={22}><FaLock size={15} color="#eee" /></PanelSlot>
        <PanelSlot $w={35.5}><HeaderGap $w={12.5} /><PowerIcon /></PanelSlot>
      </Panel>

      <TabStrip>
        <StripSlot $w={42}><Firefox s={18} /></StripSlot>
        <StripDivider />
        <BrowserTab $w={229} $pl={12} $pr={13}><Spinner /><TabLabel>Download Tenable Nessus</TabLabel><X size={13} strokeWidth={1.500} /></BrowserTab>
        <BrowserTab $w={221} $pl={8} $pr={9} $on><NessusIcon /><TabLabel>Nessus Essentials / Folders</TabLabel><X size={13} strokeWidth={1.500} /></BrowserTab>
        <StripSlot $w={44}><Plus size={15} strokeWidth={1.500} /></StripSlot>
        <Grow />
        <StripSlot $w={40}><ChevronDown size={16} strokeWidth={1.300} /></StripSlot>
        <StripSlot $w={45} />
        <WinDot /><WinDot /><WinDot $on><X size={11} strokeWidth={3.500} /></WinDot>
      </TabStrip>
      <NavBar>
        <NavBtn><ArrowLeft size={17} strokeWidth={1.600} /></NavBtn>
        <NavBtn $dim><ArrowRight size={17} strokeWidth={1.400} /></NavBtn>
        <NavBtn><RotateCw size={16} strokeWidth={1.700} /></NavBtn>
        <NavBtn><Home size={16} strokeWidth={1.600} /></NavBtn>
        <UrlBox>
          <ShieldOut /><UrlGap /><LockWarn />
          <UrlAddr>https://<b>kali</b>:8834/#/scans/reports/5/hosts</UrlAddr>
          <Star size={16} strokeWidth={1.300} color="#e8e8ea" />
        </UrlBox>
        <Grow />
        <NavBtn><Pocket /></NavBtn>
        <NavBtn><Puzzle size={16} strokeWidth={1.300} /></NavBtn>
        <NavBtn><Menu size={16} strokeWidth={1.400} /></NavBtn>
      </NavBar>
      <Bookmarks>
        <Bookmark><BmKali />Kali Linux</Bookmark>
        <Bookmark><BmTools />Kali Tools</Bookmark>
        <Bookmark><BmDocs />Kali Docs</Bookmark>
        <Bookmark><BmForums />Kali Forums</Bookmark>
        <Bookmark><BmHunter />Kali NetHunter</Bookmark>
        <Bookmark><Bug />Exploit-DB</Bookmark>
        <Bookmark><Bug />Google Hacking DB</Bookmark>
        <Bookmark><BmOff />OffSec</Bookmark>
      </Bookmarks>

      <FeedBar>
        <svg width="11" height="13" viewBox="0 0 11 13"><ellipse cx="5.500" cy="6.500" rx="5.500" ry="6.500" fill="#dd4b50" /><rect x="4.500" y="2.500" width="2" height="5.500" fill="#fff" /><rect x="4.500" y="9" width="2" height="2" fill="#fff" /></svg>
        <span>There's an error with your feed. <Link>Click here to view your license information.</Link></span>
      </FeedBar>
      <AppHeader>
        <TenableRing /><Wordmark>tenable</Wordmark><Product>Nessus Essentials</Product>
        <HeaderGap $w={32.5} /><TopNav $on>Scans</TopNav><HeaderGap $w={39} /><TopNav>Settings</TopNav>
        <HeadRight>
          <FaQuestionCircle size={15} />
          <HeaderGap $w={30} />
          <FaBell size={16} />
          <HeaderGap $w={26} />
          <TopNav>Piccio</TopNav>
          <Avatar><FaUser size={15} /></Avatar>
        </HeadRight>
      </AppHeader>
      <Main>
        <Sidebar>
          <SideLabel>FOLDERS</SideLabel>
          <SideItem><FolderGlyph />My Scans</SideItem>
          <SideItem><FolderGlyph />All Scans</SideItem>
          <SideItem><TrashGlyph />Trash</SideItem>
          <SideLabel $mt={28}>RESOURCES</SideLabel>
          <SideItem><ShieldStar />Policies</SideItem>
          <SideItem><PlugBox />Plugin Rules</SideItem>
          <SideItem><Fingerprint size={15} strokeWidth={1.800} color="#333" />Terrascan</SideItem>
          <NewsCard>
            <NewsHead>Tenable News</NewsHead>
            <NewsTitle>Flowise Stored Cross-Site Scripting</NewsTitle>
            <NewsMore><Link>Read More</Link></NewsMore>
          </NewsCard>
          <SideFoot><ChevronsLeft size={13} strokeWidth={1.200} /></SideFoot>
        </Sidebar>
        <Content>
          <PageHead>
            <PageTitleCol>
              <PageTitle>meta</PageTitle>
              <Back><ChevronLeft size={9} strokeWidth={4} />Back to My Scans</Back>
            </PageTitleCol>
            <ActionRow>
              <Action $w={90} $l>Configure</Action>
              <Action $w={92} $r $div>Audit Trail</Action>
              <Action $w={95} $ml={20} $l $r $caret>Launch<Caret /></Action>
              <Action $w={71} $ml={20} $l $r>Report</Action>
              <Action $w={95} $ml={1} $l $r $caret>Export<Caret /></Action>
            </ActionRow>
          </PageHead>
          <Body>
            <TabRow>
              <ScanTab $w={103} $on>Hosts<Count>13</Count></ScanTab>
              <ScanTab $w={158}>Vulnerabilities<Count>120</Count></ScanTab>
              <ScanTab $w={142}>Remediations<Count>8</Count></ScanTab>
              <ScanTab $w={103}>History<Count>1</Count></ScanTab>
            </TabRow>
            <FilterRow>
              <FilterGroup>
                <FilterBtn>Filter<Caret /></FilterBtn>
                <SearchField>Search Hosts<Search size={15} strokeWidth={2.200} color="#c0c0c0" /></SearchField>
              </FilterGroup>
              <HostCount><b>13</b> Hosts</HostCount>
            </FilterRow>
            <Columns>
              <Table>
                <Row $head>
                  <Check /><span>Host</span><span>Vulnerabilities ▾</span><span />
                </Row>
                {rows.map(([ip, segs]) => (
                  <Row key={ip}>
                    <Check />
                    <span>{ip}</span>
                    <Track>
                      {segs.map(([k, w, t], i) => (
                        <Seg key={i} $c={C[k]} $t={k === "crit" || k === "high" ? "#f3dfe2" : "#222"} style={{ width: `${(w / 1055) * 100}%` }}>{t}</Seg>
                      ))}
                    </Track>
                    <RowX><X size={18} strokeWidth={3.600} /></RowX>
                  </Row>
                ))}
              </Table>
              <Aside>
                <AsideTitle>Scan Details</AsideTitle>
                <Details>
                  {details.map(([k, v]) => (
                    <DetailRow key={k}>
                      <span>{k}</span><span>{v}</span>
                      {k.startsWith("Severity") ? <PencilWrap><Pencil size={12} fill="#ccc" /></PencilWrap> : <span />}
                    </DetailRow>
                  ))}
                </Details>
                <AsideTitle $mt={28}>Vulnerabilities</AsideTitle>
                <ChartRow>
                  <Donut />
                  <Legend>
                    {[["Critical", C.crit], ["High", C.high], ["Medium", C.med], ["Low", "#fbc94a"], ["Info", C.info]].map(([n, c]) => (
                      <LegendItem key={n}><LegendDot $c={c} />{n}</LegendItem>
                    ))}
                  </Legend>
                </ChartRow>
              </Aside>
            </Columns>
          </Body>
        </Content>
        <ScrollThumb />
      </Main>

      <StatusBar>
        {Array.from({ length: 11 }, (_, i) => <StatusIcon key={i}><St k={i} /></StatusIcon>)}
        <StatusText>CTRL (DESTRA)</StatusText>
      </StatusBar>
      <Taskbar>
        <Weather>
          <WeatherOrb><WeatherBadge>1</WeatherBadge></WeatherOrb>
          <WeatherText>22°C<span>Soleggiato</span></WeatherText>
        </Weather>
        <TaskSlot><WinLogo /></TaskSlot>
        <SearchPill><Search size={22} strokeWidth={1.800} />Cerca</SearchPill>
        <TaskSlot><TaskView /></TaskSlot>
        <TaskSlot><Explorer /></TaskSlot>
        <TaskSlot><Edge /></TaskSlot>
        <TaskSlot><Store /></TaskSlot>
        <TaskSlot><Outlook /></TaskSlot>
        <TaskSlot><Chrome /><TaskPip /></TaskSlot>
        <TaskSlot><VeraLogo /><TaskPip /></TaskSlot>
        <TaskSlot $on><VBoxTask /><TaskPip $on /></TaskSlot>
        <Tray>
          <TaskSlot $w={36}><ChevronUp size={18} strokeWidth={2} /></TaskSlot>
          <TaskSlot $w={44}><CloudX /></TaskSlot>
          <TaskSlot $w={34}><Wifi size={19} strokeWidth={1.800} /></TaskSlot>
          <TaskSlot $w={28}><Volume2 size={19} strokeWidth={1.500} /></TaskSlot>
          <TaskSlot $w={32}><BatteryOut /></TaskSlot>
          <TrayClock>15:35<br />30/10/2024</TrayClock>
          <TaskSlot $w={38}><PinkBell /></TaskSlot>
        </Tray>
      </Taskbar>
    </Desktop>
  );
}
